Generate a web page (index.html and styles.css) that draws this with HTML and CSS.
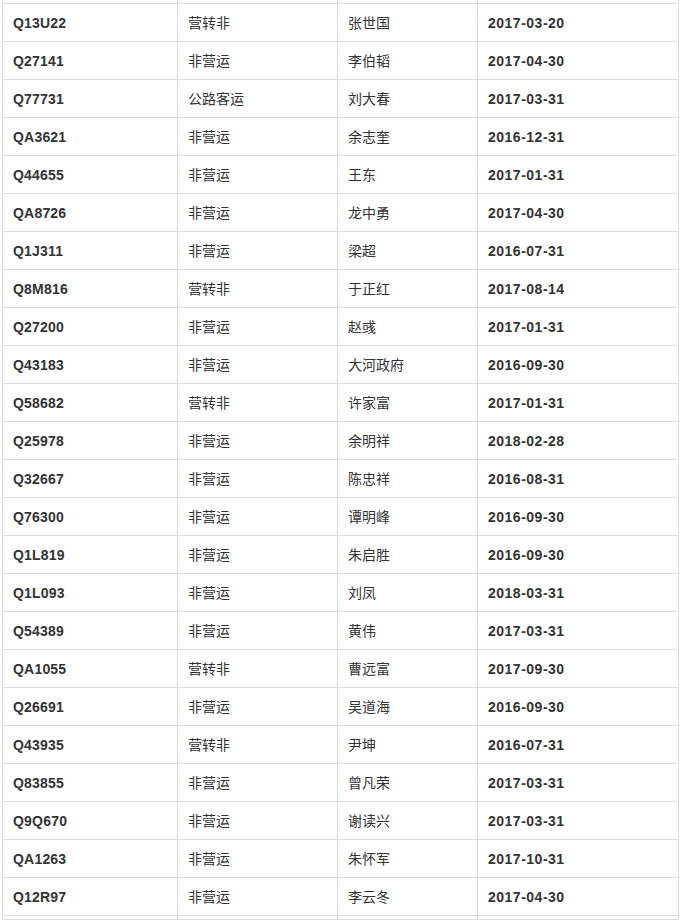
FILE: index.html
```html
<!DOCTYPE html>
<html lang="zh">
<head>
<meta charset="utf-8">
<title>车辆列表</title>
<link rel="stylesheet" href="styles.css">
</head>
<body>
<table class="data-table">
<colgroup>
<col class="c-plate"><col class="c-type"><col class="c-owner"><col class="c-date">
</colgroup>
<tbody>
<tr class="stub"><td></td><td></td><td></td><td></td></tr>
<tr><th>Q13U22</th><td>营转非</td><td>张世国</td><td class="date">2017-03-20</td></tr>
<tr><th>Q27141</th><td>非营运</td><td>李伯韬</td><td class="date">2017-04-30</td></tr>
<tr><th>Q77731</th><td>公路客运</td><td>刘大春</td><td class="date">2017-03-31</td></tr>
<tr><th>QA3621</th><td>非营运</td><td>余志奎</td><td class="date">2016-12-31</td></tr>
<tr><th>Q44655</th><td>非营运</td><td>王东</td><td class="date">2017-01-31</td></tr>
<tr><th>QA8726</th><td>非营运</td><td>龙中勇</td><td class="date">2017-04-30</td></tr>
<tr><th>Q1J311</th><td>非营运</td><td>梁超</td><td class="date">2016-07-31</td></tr>
<tr><th>Q8M816</th><td>营转非</td><td>于正红</td><td class="date">2017-08-14</td></tr>
<tr><th>Q27200</th><td>非营运</td><td>赵彧</td><td class="date">2017-01-31</td></tr>
<tr><th>Q43183</th><td>非营运</td><td>大河政府</td><td class="date">2016-09-30</td></tr>
<tr><th>Q58682</th><td>营转非</td><td>许家富</td><td class="date">2017-01-31</td></tr>
<tr><th>Q25978</th><td>非营运</td><td>余明祥</td><td class="date">2018-02-28</td></tr>
<tr><th>Q32667</th><td>非营运</td><td>陈忠祥</td><td class="date">2016-08-31</td></tr>
<tr><th>Q76300</th><td>非营运</td><td>谭明峰</td><td class="date">2016-09-30</td></tr>
<tr><th>Q1L819</th><td>非营运</td><td>朱启胜</td><td class="date">2016-09-30</td></tr>
<tr><th>Q1L093</th><td>非营运</td><td>刘凤</td><td class="date">2018-03-31</td></tr>
<tr><th>Q54389</th><td>非营运</td><td>黄伟</td><td class="date">2017-03-31</td></tr>
<tr><th>QA1055</th><td>营转非</td><td>曹远富</td><td class="date">2017-09-30</td></tr>
<tr><th>Q26691</th><td>非营运</td><td>吴道海</td><td class="date">2016-09-30</td></tr>
<tr><th>Q43935</th><td>营转非</td><td>尹坤</td><td class="date">2016-07-31</td></tr>
<tr><th>Q83855</th><td>非营运</td><td>曾凡荣</td><td class="date">2017-03-31</td></tr>
<tr><th>Q9Q670</th><td>非营运</td><td>谢读兴</td><td class="date">2017-03-31</td></tr>
<tr><th>QA1263</th><td>非营运</td><td>朱怀军</td><td class="date">2017-10-31</td></tr>
<tr><th>Q12R97</th><td>非营运</td><td>李云冬</td><td class="date">2017-04-30</td></tr>
<tr class="stub"><td></td><td></td><td></td><td></td></tr>
</tbody>
</table>
</body>
</html>
```
FILE: styles.css
```css
html, body {
  margin: 0;
  padding: 0;
  background: #fff;
  overflow: hidden;
}
body {
  font-family: "Liberation Sans", Arial, "Noto Sans CJK SC", sans-serif;
  font-size: 14px;
  line-height: 20px;
  color: #333;
}
.data-table {
  border-collapse: collapse;
  table-layout: fixed;
  width: 676px;
  margin: 0 0 0 2px;
}
.c-plate { width: 175px; }
.c-type { width: 160px; }
.c-owner { width: 140px; }
.c-date { width: 201px; }
.data-table th,
.data-table td {
  border: 1px solid #ddd;
  padding: 9px 10px 8px;
  text-align: left;
  vertical-align: top;
  height: 20px;
  white-space: nowrap;
}
.data-table th {
  font-weight: bold;
  letter-spacing: 0.2px;
}
.data-table td {
  font-weight: normal;
}
.data-table td.date {
  font-weight: bold;
  letter-spacing: 0.5px;
}
.data-table .stub td {
  border-top: 0;
  padding: 0;
  height: 3px;
}
```
